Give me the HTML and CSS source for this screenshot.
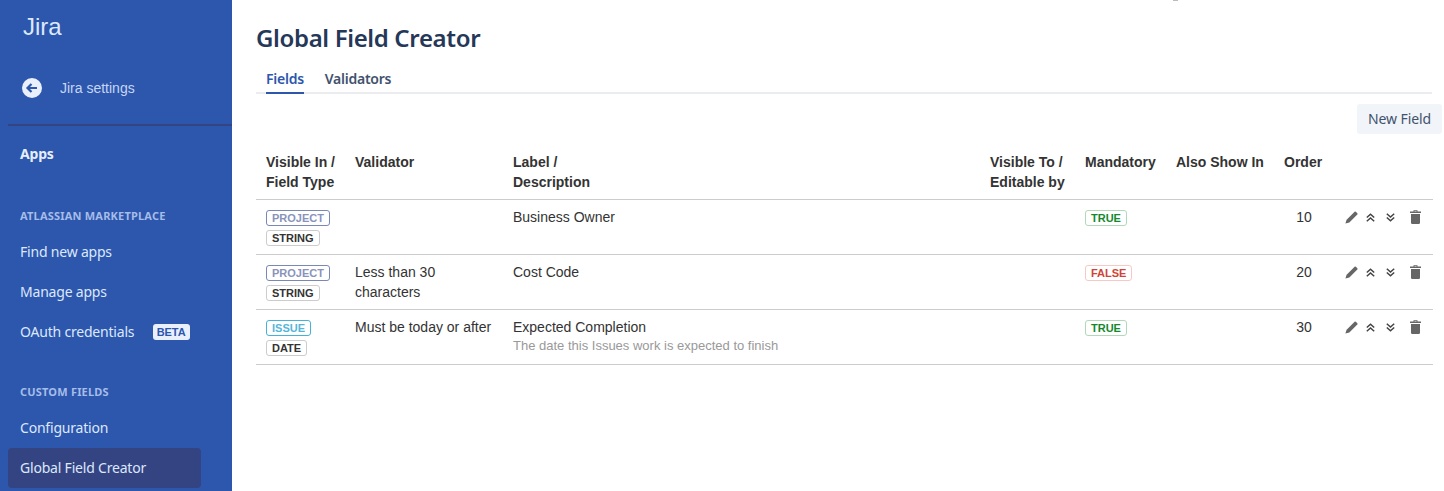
FILE: index.html
```html
<!DOCTYPE html>
<html lang="en">
<head>
    <meta charset="UTF-8">
    <meta name="viewport" content="width=device-width, initial-scale=1.0">
    <title>Global Field Creator</title>
    <link rel="stylesheet" href="styles.css">
</head>
<body>
    <svg class="icon-defs" width="0" height="0">
        <symbol id="i-pencil" viewBox="0 0 13 13"><path d="M9.600.7a.9.900 0 0 1 1.200 0l1.500 1.500a.9.900 0 0 1 0 1.200L4.300 11.400.4 12.600l1.200-3.900z" fill="currentColor"/></symbol>
        <symbol id="i-up" viewBox="0 0 9 9"><path d="M.8 4.500 4.500 1.200 8.200 4.500M.8 8.300 4.500 5 8.200 8.300" fill="none" stroke="currentColor" stroke-width="1.500"/></symbol>
        <symbol id="i-down" viewBox="0 0 9 9"><path d="M.8.7 4.500 4 8.200.7M.8 4.500 4.500 7.800 8.200 4.500" fill="none" stroke="currentColor" stroke-width="1.500"/></symbol>
        <symbol id="i-trash" viewBox="0 0 11 14"><path d="M3.500 1.500V.3h4v1.200H11V3H0V1.500zM4.500 1.500h2V1h-2zM1 4h9v8.700A1.300 1.300 0 0 1 8.700 14H2.300A1.300 1.300 0 0 1 1 12.700z" fill="currentColor" fill-rule="evenodd"/></symbol>
    </svg>

    <aside class="sidebar">
        <div class="brand">Jira</div>
        <a class="back-link">
            <svg class="back-icon" viewBox="0 0 20 20" width="20" height="20"><circle cx="10" cy="10" r="10" fill="#e9f0fb"/><path d="M15 10H6M9.500 6 5.500 10l4 4" fill="none" stroke="#2d56ad" stroke-width="2.200"/></svg>
            <span>Jira settings</span>
        </a>
        <div class="divider"></div>
        <div class="apps-title">Apps</div>
        <div class="nav-heading first">ATLASSIAN MARKETPLACE</div>
        <a class="nav-item">Find new apps</a>
        <a class="nav-item">Manage apps</a>
        <a class="nav-item">OAuth credentials <span class="beta">BETA</span></a>
        <div class="nav-heading second">CUSTOM FIELDS</div>
        <a class="nav-item">Configuration</a>
        <a class="nav-item active">Global Field Creator</a>
    </aside>

    <main class="content">
        <span class="top-speck"></span>
        <h1>Global Field Creator</h1>
        <div class="tabs">
            <a class="tab selected">Fields</a>
            <a class="tab">Validators</a>
        </div>
        <div class="actions"><button class="new-field">New Field</button></div>

        <table class="fields">
            <colgroup>
                <col class="c-visible"><col class="c-validator"><col class="c-label"><col class="c-editable"><col class="c-mandatory"><col class="c-also"><col class="c-order"><col>
            </colgroup>
            <thead>
                <tr>
                    <th>Visible In /<br>Field Type</th>
                    <th>Validator</th>
                    <th>Label /<br>Description</th>
                    <th>Visible To /<br>Editable by</th>
                    <th>Mandatory</th>
                    <th>Also Show In</th>
                    <th>Order</th>
                    <th></th>
                </tr>
            </thead>
            <tbody>
                <tr>
                    <td><span class="tag project">PROJECT</span><span class="tag type">STRING</span></td>
                    <td></td>
                    <td>Business Owner</td>
                    <td></td>
                    <td><span class="tag yes">TRUE</span></td>
                    <td></td>
                    <td class="order">10</td>
                    <td><div class="row-icons">
                        <svg class="pencil"><use href="#i-pencil"/></svg><svg class="chev"><use href="#i-up"/></svg><svg class="chev"><use href="#i-down"/></svg><svg class="trash"><use href="#i-trash"/></svg>
                    </div></td>
                </tr>
                <tr>
                    <td><span class="tag project">PROJECT</span><span class="tag type">STRING</span></td>
                    <td>Less than 30 characters</td>
                    <td>Cost Code</td>
                    <td></td>
                    <td><span class="tag no">FALSE</span></td>
                    <td></td>
                    <td class="order">20</td>
                    <td><div class="row-icons">
                        <svg class="pencil"><use href="#i-pencil"/></svg><svg class="chev"><use href="#i-up"/></svg><svg class="chev"><use href="#i-down"/></svg><svg class="trash"><use href="#i-trash"/></svg>
                    </div></td>
                </tr>
                <tr>
                    <td><span class="tag issue">ISSUE</span><span class="tag type">DATE</span></td>
                    <td>Must be today or after</td>
                    <td>Expected Completion<div class="desc">The date this Issues work is expected to finish</div></td>
                    <td></td>
                    <td><span class="tag yes">TRUE</span></td>
                    <td></td>
                    <td class="order">30</td>
                    <td><div class="row-icons">
                        <svg class="pencil"><use href="#i-pencil"/></svg><svg class="chev"><use href="#i-up"/></svg><svg class="chev"><use href="#i-down"/></svg><svg class="trash"><use href="#i-trash"/></svg>
                    </div></td>
                </tr>
            </tbody>
        </table>
    </main>
</body>
</html>
```

FILE: styles.css
```css
* {
    box-sizing: border-box;
}
html, body {
    height: 491px;
    overflow: hidden;
}
body {
    margin: 0;
    display: flex;
    background-color: #fff;
    font-family: "Liberation Sans", Arial, sans-serif;
    font-size: 14px;
    color: #333;
}
.icon-defs {
    position: absolute;
}
.sidebar {
    width: 232px;
    height: 491px;
    flex-shrink: 0;
    background-color: #2d56ad;
    color: #dce8fb;
    font-family: "Noto Sans", sans-serif;
    overflow: hidden;
}
.brand {
    padding: 10px 0 0 23px;
    height: 63px;
    font-family: "Liberation Sans", sans-serif;
    font-size: 24px;
    line-height: 34px;
    color: #dce8fb;
}
.back-link {
    display: flex;
    align-items: center;
    height: 50px;
    padding-left: 22px;
    font-family: "Liberation Sans", sans-serif;
    color: #c5d6f5;
}
.back-icon {
    margin-right: 18px;
}
.divider {
    margin: 11px 0 0 8px;
    height: 2px;
    background-color: #344382;
}
.apps-title {
    margin-top: 18px;
    padding-left: 20px;
    line-height: 20px;
    font-weight: 700;
    letter-spacing: -0.2px;
    color: #e6eefb;
}
.nav-heading {
    padding-left: 20px;
    font-size: 11px;
    line-height: 16px;
    font-weight: 700;
    letter-spacing: 0.2px;
    color: #a5bde8;
}
.nav-heading.first {
    margin-top: 44px;
    margin-bottom: 7px;
}
.nav-heading.second {
    margin-top: 33px;
    margin-bottom: 7px;
}
.nav-item {
    display: flex;
    align-items: center;
    height: 40px;
    width: 193px;
    margin-left: 8px;
    padding-left: 12px;
    border-radius: 4px;
    letter-spacing: -0.2px;
    white-space: pre;
}
.nav-item.active {
    margin-top: 1px;
    padding-bottom: 2px;
    background-color: #344382;
}
.beta {
    margin-left: 15px;
    margin-top: 1px;
    padding: 0 4px;
    height: 16px;
    line-height: 16px;
    border-radius: 3px;
    background-color: #e9f0fb;
    color: #2d56ad;
    font-family: "Liberation Sans", sans-serif;
    font-size: 11px;
    font-weight: 700;
    letter-spacing: -0.1px;
}
.content {
    position: relative;
    flex: 1;
    padding: 0 11px 0 24px;
}
.top-speck {
    position: absolute;
    left: 941px;
    top: 0;
    width: 5px;
    height: 1px;
    background-color: #bbb;
}
h1 {
    margin: 0;
    padding-top: 22px;
    font-family: "Noto Sans", sans-serif;
    font-size: 24px;
    line-height: 32px;
    font-weight: 600;
    color: #253858;
    letter-spacing: -0.35px;
}
.tabs {
    display: flex;
    gap: 21px;
    margin-top: 10px;
    margin-right: 1px;
    padding-left: 10px;
    height: 30px;
    border-bottom: 2px solid #ebecf0;
    font-family: "Noto Sans", sans-serif;
    font-weight: 600;
    color: #42526e;
}
.tab {
    height: 30px;
    line-height: 30px;
    letter-spacing: -0.25px;
}
.tab.selected {
    color: #2d56ad;
    border-bottom: 2px solid #2d56ad;
}
.actions {
    display: flex;
    justify-content: flex-end;
    margin-top: 10px;
    margin-right: -9px;
}
.new-field {
    width: 85px;
    height: 30px;
    border: none;
    border-radius: 3px;
    background-color: #f1f4f8;
    color: #42526e;
    font-family: "Noto Sans", sans-serif;
    font-size: 14px;
    letter-spacing: -0.1px;
    padding: 0 0 2px;
}
table.fields {
    width: 1177px;
    margin-top: 13px;
    border-collapse: collapse;
    table-layout: fixed;
}
.c-visible { width: 89px; }
.c-validator { width: 158px; }
.c-label { width: 477px; }
.c-editable { width: 95px; }
.c-mandatory { width: 91px; }
.c-also { width: 108px; }
.c-order { width: 61px; }
th {
    padding: 5px 10px 7px;
    text-align: left;
    vertical-align: top;
    line-height: 20px;
    font-weight: 700;
    white-space: nowrap;
    border-bottom: 1px solid #ccc;
}
td {
    height: 55px;
    padding: 7px 10px 0;
    vertical-align: top;
    line-height: 20px;
    border-bottom: 1px solid #ccc;
}
td.order {
    text-align: center;
    padding-right: 11px;
}
.desc {
    margin-top: 1px;
    font-size: 13px;
    line-height: 16px;
    color: #999;
}
.tag {
    display: block;
    width: fit-content;
    height: 16px;
    padding: 0 5px;
    margin: 3px 0 4px;
    border: 1px solid #ccc;
    border-radius: 3px;
    font-size: 11px;
    line-height: 14px;
    font-weight: 700;
    white-space: nowrap;
}
.tag + .tag {
    margin-top: 4px;
}
.tag.type {
    color: #333;
}
.tag.project {
    color: #8993bc;
    border-color: #7a88b5;
}
.tag.issue {
    color: #55b6d9;
    border-color: #45b2d8;
}
.tag.yes {
    color: #14892c;
    border-color: #b2d8b9;
}
.tag.no {
    color: #d04437;
    border-color: #f8c9c4;
}
.row-icons {
    display: flex;
    align-items: center;
    height: 14px;
    margin-top: 3px;
    color: #666;
}
.row-icons svg {
    flex-shrink: 0;
}
.pencil {
    width: 13px;
    height: 13px;
}
.chev {
    width: 9px;
    height: 9px;
    color: #444;
    margin-left: 8px;
}
.chev + .chev {
    margin-left: 11px;
}
.trash {
    width: 11px;
    height: 14px;
    margin-left: 15px;
}
```
